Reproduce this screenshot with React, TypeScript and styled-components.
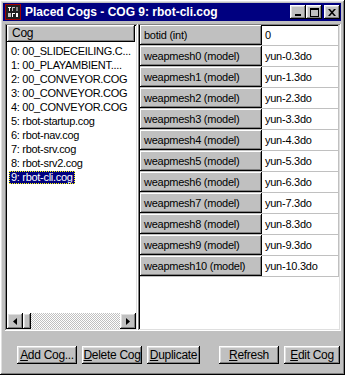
import React from "react";
import styled, { createGlobalStyle } from "styled-components";

const GlobalStyle = createGlobalStyle`
  html, body {
    margin: 0;
    padding: 0;
    background: #c0c0c0;
  }
  * {
    box-sizing: border-box;
  }
`;

const raised = `
  box-shadow: inset -1px -1px #000, inset 1px 1px #fff, inset -2px -2px #808080, inset 2px 2px #dfdfdf;
`;

const sunken = `
  box-shadow: inset -1px -1px #fff, inset 1px 1px #808080, inset -2px -2px #dfdfdf, inset 2px 2px #000;
`;

const Window = styled.div`
  width: 345px;
  height: 375px;
  padding: 3px 4px 4px 3px;
  background: #c0c0c0;
  display: flex;
  flex-direction: column;
  font-family: "Liberation Sans", Arial, sans-serif;
  font-size: 11px;
  letter-spacing: -0.25px;
  color: #000;
  ${raised}
`;

const TitleBar = styled.div`
  height: 18px;
  background: #000080;
  display: flex;
  align-items: center;
  padding: 0 1px 0 2px;
  flex-shrink: 0;
`;

const TitleText = styled.span`
  flex: 1;
  margin-left: 4px;
  color: #fff;
  font-weight: bold;
  font-size: 12px;
  letter-spacing: 0;
  white-space: nowrap;
`;

const CaptionButton = styled.div<{ $gapBefore?: number }>`
  width: 16px;
  height: 14px;
  margin-left: ${(p) => p.$gapBefore ?? 0}px;
  background: #c0c0c0;
  display: flex;
  align-items: center;
  justify-content: center;
  ${raised}
`;

const Client = styled.div`
  flex: 1;
  display: flex;
  flex-direction: column;
  padding-top: 3px;
`;

const Panes = styled.div`
  height: 307px;
  display: flex;
  padding-left: 2px;
`;

const ListPane = styled.div`
  width: 133px;
  padding: 2px;
  display: flex;
  flex-direction: column;
  background: #fff;
  ${sunken}
`;

const ListHeader = styled.div`
  height: 17px;
  margin: -1px 1px 0 0;
  padding-left: 5px;
  line-height: 17px;
  font-size: 12px;
  background: #c0c0c0;
  ${raised}
`;

const ListItems = styled.div`
  flex: 1;
  padding-top: 2px;
`;

const ListItem = styled.div<{ $selected?: boolean }>`
  height: 14px;
  line-height: 14px;
  padding-left: 4px;
  white-space: nowrap;
  overflow: hidden;
  font-size: 11px;
  letter-spacing: -0.3px;

  span {
    padding: 0 2px;
    margin-left: -2px;
    display: inline-block;
    height: 13px;
    line-height: 13px;
    background: ${(p) => (p.$selected ? "#000080" : "transparent")};
    color: ${(p) => (p.$selected ? "#fff" : "#000")};
    outline: ${(p) => (p.$selected ? "1px dotted #ffff00" : "none")};
    outline-offset: -1px;
  }
`;

const HScroll = styled.div`
  height: 16px;
  display: flex;
`;

const ScrollArrow = styled.div`
  width: 16px;
  height: 16px;
  background: #c0c0c0;
  display: flex;
  align-items: center;
  justify-content: center;
  ${raised}
`;

const ScrollThumb = styled.div`
  width: 8px;
  height: 16px;
  background: #c0c0c0;
  ${raised}
`;

const ScrollTrack = styled.div`
  flex: 1;
  background-color: #c0c0c0;
  background-image: conic-gradient(#fff 25%, #c0c0c0 0 50%, #fff 0 75%, #c0c0c0 0);
  background-size: 2px 2px;
`;

const GridPane = styled.div`
  width: 203px;
  padding: 1px 2px 2px 2px;
  background: #fff;
  ${sunken}
`;

const GridRow = styled.div`
  display: grid;
  grid-template-columns: 122px 77px;
  height: 21px;
  border-bottom: 1px solid #c0c0c0;
`;

const LabelCell = styled.div`
  background: #c0c0c0;
  padding-left: 4px;
  line-height: 20px;
  white-space: nowrap;
  font-size: 11px;
  box-shadow: inset -1px -1px #000, inset 1px 1px #fff, inset -2px -2px #808080;
`;

const ValueCell = styled.div`
  padding-left: 3px;
  line-height: 20px;
  white-space: nowrap;
  font-size: 11px;
  border-right: 1px solid #c0c0c0;
`;

const ButtonBar = styled.div`
  flex: 1;
  display: flex;
  gap: 5px;
  padding: 15px 0 0 14px;
`;

const Spacer = styled.div`
  width: 9px;
`;

const Button = styled.div<{ $width: number }>`
  width: ${(p) => p.$width}px;
  height: 18px;
  background: #c0c0c0;
  display: flex;
  align-items: center;
  justify-content: center;
  font-size: 12px;
  letter-spacing: -0.3px;
  ${raised}
`;

const cogs = [
  "0: 00_SLIDECEILING.C...",
  "1: 00_PLAYAMBIENT....",
  "2: 00_CONVEYOR.COG",
  "3: 00_CONVEYOR.COG",
  "4: 00_CONVEYOR.COG",
  "5: rbot-startup.cog",
  "6: rbot-nav.cog",
  "7: rbot-srv.cog",
  "8: rbot-srv2.cog",
  "9: rbot-cli.cog",
];

const fields: [string, string][] = [
  ["botid (int)", "0"],
  ...Array.from({ length: 11 }, (_, i): [string, string] => [`weapmesh${i} (model)`, `yun-${i}.3do`]),
];

const AppIcon = () => (
  <svg width="16" height="16" viewBox="0 0 16 16" shapeRendering="crispEdges">
    <rect x="0.5" y="0.5" width="15" height="15" fill="#202020" stroke="#a00000" />
    <rect x="3" y="3" width="3" height="1" fill="#fff" />
    <rect x="4" y="4" width="1" height="3" fill="#fff" />
    <rect x="7" y="3" width="3" height="1" fill="#c0c0c0" />
    <rect x="7" y="4" width="1" height="3" fill="#c0c0c0" />
    <rect x="11" y="3" width="2" height="4" fill="#808080" />
    <rect x="3" y="9" width="3" height="4" fill="#c0c0c0" />
    <rect x="7" y="9" width="3" height="1" fill="#fff" />
    <rect x="7" y="10" width="1" height="3" fill="#fff" />
    <rect x="11" y="9" width="2" height="4" fill="#fff" />
  </svg>
);

const Arrow = ({ dir }: { dir: "left" | "right" }) => (
  <svg width="4" height="7" viewBox="0 0 4 7">
    {dir === "left" ? <path d="M4 0V7L0 3.5Z" fill="#000" /> : <path d="M0 0V7L4 3.5Z" fill="#000" />}
  </svg>
);

const App = () => (
  <>
    <GlobalStyle />
    <Window>
      <TitleBar>
        <AppIcon />
        <TitleText>Placed Cogs - COG 9: rbot-cli.cog</TitleText>
        <CaptionButton>
          <svg width="8" height="8" viewBox="0 0 8 8">
            <rect x="1" y="6" width="6" height="2" fill="#000" />
          </svg>
        </CaptionButton>
        <CaptionButton>
          <svg width="9" height="9" viewBox="0 0 9 9" shapeRendering="crispEdges">
            <rect x="0.5" y="0.5" width="8" height="8" fill="none" stroke="#000" />
            <rect x="0" y="0" width="9" height="2" fill="#000" />
          </svg>
        </CaptionButton>
        <CaptionButton $gapBefore={2}>
          <svg width="8" height="7" viewBox="0 0 8 7">
            <path d="M0 0H2L4 2.3L6 0H8L5 3.5L8 7H6L4 4.7L2 7H0L3 3.5Z" fill="#000" />
          </svg>
        </CaptionButton>
      </TitleBar>
      <Client>
        <Panes>
          <ListPane>
            <ListHeader>Cog</ListHeader>
            <ListItems>
              {cogs.map((c, i) => (
                <ListItem key={c + i} $selected={i === 9}>
                  <span>{c}</span>
                </ListItem>
              ))}
            </ListItems>
            <HScroll>
              <ScrollArrow>
                <Arrow dir="left" />
              </ScrollArrow>
              <ScrollThumb />
              <ScrollTrack />
              <ScrollArrow>
                <Arrow dir="right" />
              </ScrollArrow>
            </HScroll>
          </ListPane>
          <GridPane>
            {fields.map(([label, value]) => (
              <GridRow key={label}>
                <LabelCell>{label}</LabelCell>
                <ValueCell>{value}</ValueCell>
              </GridRow>
            ))}
          </GridPane>
        </Panes>
        <ButtonBar>
          <Button $width={60}>
            <span><u>A</u>dd Cog...</span>
          </Button>
          <Button $width={60}>
            <span><u>D</u>elete Cog</span>
          </Button>
          <Button $width={53}>
            <span><u>D</u>uplicate</span>
          </Button>
          <Spacer />
          <Button $width={60}>
            <span><u>R</u>efresh</span>
          </Button>
          <Button $width={56}>
            <span><u>E</u>dit Cog</span>
          </Button>
        </ButtonBar>
      </Client>
    </Window>
  </>
);

export default App;
